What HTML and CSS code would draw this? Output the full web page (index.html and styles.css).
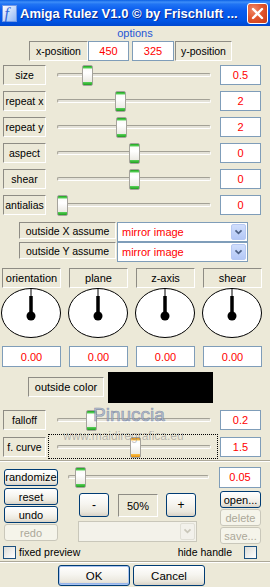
FILE: index.html
```html
<!DOCTYPE html>
<html>
<head>
<meta charset="utf-8">
<title>Amiga Rulez</title>
<link rel="stylesheet" href="styles.css">
</head>
<body>
<div class="titlebar">
  <svg class="app-icon" viewBox="0 0 16 17">
    <defs><linearGradient id="ig" x1="0" y1="0" x2="1" y2="1"><stop offset="0" stop-color="#ffffff"/><stop offset="1" stop-color="#8eb4f5"/></linearGradient></defs>
    <rect x="0.5" y="0.5" width="14" height="16" fill="url(#ig)" stroke="#6f97e6"/>
    <text x="2.5" y="14" font-family="Liberation Serif" font-style="italic" font-size="16" fill="#2f63d9">f</text>
  </svg>
  <div class="title">Amiga Rulez V1.0 © by Frischluft ...</div>
  <div class="close"><svg viewBox="0 0 19 19"><path d="M5 5 L14 14 M14 5 L5 14" stroke="#fff" stroke-width="2.4" stroke-linecap="round"/></svg></div>
</div>

<div class="opt-title">options</div>

<div class="pos-row">
  <div class="lbl w59">x-position</div>
  <div class="val w41">450</div>
  <div class="val w42 ml3">325</div>
  <div class="lbl w57 ml1">y-position</div>
</div>

<div class="sliders">
  <div class="srow"><div class="lbl">size</div><div class="slider"><div class="track"></div><div class="thumb" style="left:30px"></div></div><div class="val">0.5</div></div>
  <div class="srow"><div class="lbl">repeat x</div><div class="slider"><div class="track"></div><div class="thumb" style="left:63px"></div></div><div class="val">2</div></div>
  <div class="srow"><div class="lbl">repeat y</div><div class="slider"><div class="track"></div><div class="thumb" style="left:64px"></div></div><div class="val">2</div></div>
  <div class="srow"><div class="lbl">aspect</div><div class="slider"><div class="track"></div><div class="thumb" style="left:77px"></div></div><div class="val">0</div></div>
  <div class="srow"><div class="lbl">shear</div><div class="slider"><div class="track"></div><div class="thumb" style="left:77px"></div></div><div class="val">0</div></div>
  <div class="srow"><div class="lbl">antialias</div><div class="slider"><div class="track"></div><div class="thumb" style="left:5px"></div></div><div class="val">0</div></div>
</div>

<div class="assume">
  <div class="arow"><div class="lbl">outside X assume</div><div class="select"><span>mirror image</span><div class="ddbtn"><svg viewBox="0 0 15 16"><path d="M4 6 L7.5 9.5 L11 6" stroke="#4d6185" stroke-width="2" fill="none"/></svg></div></div></div>
  <div class="arow"><div class="lbl">outside Y assume</div><div class="select"><span>mirror image</span><div class="ddbtn"><svg viewBox="0 0 15 16"><path d="M4 6 L7.5 9.5 L11 6" stroke="#4d6185" stroke-width="2" fill="none"/></svg></div></div></div>
</div>

<div class="dials">
  <div class="dial-col"><div class="lbl">orientation</div>
    <svg class="dial" viewBox="0 0 60 50"><ellipse cx="30" cy="25" rx="29.5" ry="24.5" fill="#fff" stroke="#000"/><line x1="30" y1="0.5" x2="30" y2="9" stroke="#000" stroke-width="1"/><line x1="30" y1="8" x2="30" y2="28" stroke="#000" stroke-width="3.5"/><circle cx="30" cy="28" r="4.5"/></svg>
    <div class="val">0.00</div></div>
  <div class="dial-col"><div class="lbl">plane</div>
    <svg class="dial" viewBox="0 0 60 50"><ellipse cx="30" cy="25" rx="29.5" ry="24.5" fill="#fff" stroke="#000"/><line x1="30" y1="0.5" x2="30" y2="9" stroke="#000" stroke-width="1"/><line x1="30" y1="8" x2="30" y2="28" stroke="#000" stroke-width="3.5"/><circle cx="30" cy="28" r="4.5"/></svg>
    <div class="val">0.00</div></div>
  <div class="dial-col"><div class="lbl">z-axis</div>
    <svg class="dial" viewBox="0 0 60 50"><ellipse cx="30" cy="25" rx="29.5" ry="24.5" fill="#fff" stroke="#000"/><line x1="30" y1="0.5" x2="30" y2="9" stroke="#000" stroke-width="1"/><line x1="30" y1="8" x2="30" y2="28" stroke="#000" stroke-width="3.5"/><circle cx="30" cy="28" r="4.5"/></svg>
    <div class="val">0.00</div></div>
  <div class="dial-col"><div class="lbl">shear</div>
    <svg class="dial" viewBox="0 0 60 50"><ellipse cx="30" cy="25" rx="29.5" ry="24.5" fill="#fff" stroke="#000"/><line x1="30" y1="0.5" x2="30" y2="9" stroke="#000" stroke-width="1"/><line x1="30" y1="8" x2="30" y2="28" stroke="#000" stroke-width="3.5"/><circle cx="30" cy="28" r="4.5"/></svg>
    <div class="val">0.00</div></div>
</div>

<div class="color-row">
  <div class="lbl">outside color</div>
  <div class="swatch"></div>
</div>

<div class="sliders2">
  <div class="srow"><div class="lbl">falloff</div><div class="slider"><div class="track"></div><div class="thumb" style="left:34px"></div></div><div class="val">0.2</div></div>
  <div class="srow"><div class="lbl">f. curve</div><div class="slider focus"><div class="track"></div><div class="thumb hot" style="left:78px"></div></div><div class="val">1.5</div></div>
</div>

<div class="sep"></div>

<div class="rand-row">
  <div class="btn rnd">randomize</div>
  <div class="slider rnd"><div class="track"></div><div class="thumb" style="left:13px"></div></div>
  <div class="val">0.05</div>
</div>

<div class="mid">
  <div class="col-left">
    <div class="btn">reset</div>
    <div class="btn">undo</div>
    <div class="btn disabled">redo</div>
  </div>
  <div class="col-center">
    <div class="zoom-row">
      <div class="btn zb">-</div>
      <div class="lbl pct">50%</div>
      <div class="btn zb plus">+</div>
    </div>
    <div class="combo-dis"><div class="ddbtn-dis"><svg viewBox="0 0 15 16"><path d="M4 6 L7.5 9.5 L11 6" stroke="#c9c7ba" stroke-width="2" fill="none"/></svg></div></div>
  </div>
  <div class="col-right">
    <div class="btn">open...</div>
    <div class="btn disabled">delete</div>
    <div class="btn disabled">save...</div>
  </div>
</div>

<div class="check-row">
  <div class="cb"></div><span class="cb-text">fixed preview</span>
  <span class="cb-text right">hide handle</span><div class="cb cb-r"></div>
</div>

<div class="sep sep2"></div>

<div class="ok-row">
  <div class="btn big default">OK</div>
  <div class="btn big">Cancel</div>
</div>

<div class="wm1">Pinuccia</div>
<div class="wm2">www.maidiregrafica.eu</div>
</body>
</html>
```

FILE: styles.css
```css
* { box-sizing: border-box; }
html, body { margin: 0; padding: 0; }
body {
  width: 270px;
  height: 587px;
  overflow: hidden;
  position: relative;
  background: #ece9d8;
  font-family: "Liberation Sans", Arial, sans-serif;
  font-size: 10.5px;
  color: #000;
}

/* title bar */
.titlebar {
  height: 26px;
  display: flex;
  align-items: center;
  background: linear-gradient(to bottom, #0a5fe5 0%, #3d8ef8 8%, #2074f4 16%, #0a5cee 40%, #0055e5 80%, #0048cf 100%);
  color: #fff;
}
.app-icon { width: 16px; height: 17px; margin-left: 2px; flex: none; }
.title {
  flex: 1;
  margin-left: 2px;
  font-size: 13px;
  font-weight: bold;
  white-space: nowrap;
  overflow: hidden;
  text-shadow: 1px 1px 0 #0c2a8c;
}
.close {
  width: 21px;
  height: 21px;
  margin-right: 2px;
  flex: none;
  border: 1px solid #fff;
  border-radius: 3px;
  background: radial-gradient(circle at 30% 30%, #f08a6a 0%, #e2562e 45%, #c63a18 100%);
}
.close svg { width: 19px; height: 19px; display: block; }

.opt-title {
  height: 15px;
  line-height: 15px;
  text-align: center;
  color: #2557d6;
  font-size: 11px;
}

/* generic boxes */
.lbl {
  display: flex;
  align-items: center;
  justify-content: center;
  white-space: nowrap;
  border: 1px solid;
  border-color: #8e8c84 #ffffff #ffffff #8e8c84;
}
.val {
  display: flex;
  align-items: center;
  justify-content: center;
  border: 1px solid #7f9db9;
  background: #fff;
  color: #f00;
  font-size: 11px;
}

.pos-row { display: flex; height: 20px; margin-left: 29px; }
.w59 { width: 59px; }
.w57 { width: 57px; }
.w41 { width: 41px; }
.w42 { width: 42px; }
.ml3 { margin-left: 3px; }
.ml1 { margin-left: 1px; }

/* slider rows */
.sliders { margin-top: 4px; display: flex; flex-direction: column; gap: 6px; }
.sliders2 { margin-top: 7px; display: flex; flex-direction: column; gap: 7px; }
.srow { display: flex; height: 20px; margin-left: 3px; }
.srow .lbl { width: 43px; }
.srow .val { width: 41px; margin-left: 4px; }
.slider { position: relative; width: 164px; height: 20px; margin-left: 6px; }
.track {
  position: absolute;
  left: 5px;
  right: 5px;
  top: 8px;
  height: 4px;
  border: 1px solid;
  border-color: #a3a196 #ffffff #ffffff #a3a196;
  border-radius: 2px;
  background: #e4e2d8;
}
.thumb {
  position: absolute;
  top: 0;
  width: 11px;
  height: 21px;
  border: 1px solid #a5a39c;
  border-radius: 2px;
  background: linear-gradient(to bottom, #1f9f1f 0, #5ad35a 2px, #fbfbf9 3px, #ffffff 7px, #ebeae3 16px, #5ad35a 16px, #1f9f1f 19px);
}
.thumb.hot {
  background: linear-gradient(to bottom, #e6930e 0, #fbc04a 2px, #fbfbf9 3px, #ffffff 7px, #ebeae3 16px, #fbc04a 16px, #e6930e 19px);
}
.slider.focus::before {
  content: "";
  position: absolute;
  left: -4px;
  right: -2px;
  top: -3px;
  bottom: -2px;
  border: 1px dotted #000;
}

/* assume rows */
.assume { margin-top: 7px; margin-left: 19px; }
.arow { display: flex; height: 20px; }
.arow .lbl { width: 97px; height: 17px; }
.select {
  width: 131px;
  height: 20px;
  margin-left: 1px;
  display: flex;
  align-items: center;
  padding-left: 4px;
  border: 1px solid #7f9db9;
  background: #fff;
  color: #f00;
  font-size: 11px;
}
.ddbtn {
  margin-left: auto;
  margin-right: 1px;
  width: 15px;
  height: 16px;
  border: 1px solid #b7c9f3;
  border-radius: 2px;
  background: linear-gradient(to bottom, #d0defc, #b4c8f6);
}
.ddbtn svg, .ddbtn-dis svg { display: block; width: 13px; height: 14px; }

/* dials */
.dials {
  margin-top: 6px;
  margin-left: 2px;
  display: grid;
  grid-template-columns: repeat(4, 59px);
  column-gap: 8px;
}
.dial-col { display: flex; flex-direction: column; }
.dial-col .lbl { height: 20px; font-size: 11px; }
.dial { display: block; width: 60px; height: 50px; margin-left: -1px; }
.dial-col .val { margin-top: 8px; height: 21px; }

/* outside color */
.color-row { display: flex; margin-top: 5px; margin-left: 28px; height: 31px; }
.color-row .lbl { width: 76px; height: 20px; margin-top: 5px; font-size: 11px; }
.swatch { width: 105px; height: 31px; margin-left: 4px; background: #000; }

.sep {
  height: 2px;
  margin-top: 3px;
  border-top: 1px solid #aca899;
  border-bottom: 1px solid #fff;
}
.sep2 { margin-top: 2px; }

/* buttons */
.btn {
  display: flex;
  align-items: center;
  justify-content: center;
  height: 17px;
  border: 1px solid #003c74;
  border-radius: 3px;
  background: linear-gradient(to bottom, #ffffff 0%, #f6f5f0 45%, #ebe8de 80%, #d8d2c6 100%);
  font-size: 11px;
  color: #000;
}
.btn.disabled {
  border-color: #c9c7ba;
  background: #f5f4ea;
  color: #aca899;
}

.rand-row { display: flex; align-items: center; height: 22px; margin-top: 4px; }
.btn.rnd { width: 54px; margin-left: 4px; }
.slider.rnd { width: 157px; margin-left: 4px; }
.slider.rnd .track { left: 6px; right: 10px; }
.rand-row .val { width: 42px; height: 21px; }

.mid { display: flex; }
.col-left { width: 54px; margin-left: 4px; display: flex; flex-direction: column; gap: 1px; }
.col-center { width: 119px; margin-left: 20px; margin-top: 5px; }
.zoom-row { display: flex; height: 24px; }
.btn.zb { width: 30px; height: 24px; margin-left: 1px; font-size: 12px; }
.btn.zb.plus { margin-left: 8px; }
.lbl.pct { width: 40px; height: 23px; margin-top: 1px; margin-left: 9px; font-size: 11px; }
.combo-dis {
  margin-top: 4px;
  height: 21px;
  display: flex;
  align-items: center;
  border: 1px solid #c9c7ba;
  background: #f3f2ea;
}
.ddbtn-dis {
  margin-left: auto;
  margin-right: 1px;
  width: 15px;
  height: 17px;
  border: 1px solid #e0dfd6;
  border-radius: 2px;
  background: #f2f1eb;
}
.col-right { width: 41px; margin-left: 23px; margin-top: 3px; display: flex; flex-direction: column; gap: 1px; }

/* checkboxes */
.check-row { display: flex; align-items: center; height: 14px; margin-top: 1px; padding: 0 13px 0 3px; }
.cb {
  width: 13px;
  height: 13px;
  flex: none;
  border: 1px solid #1c5180;
  background: linear-gradient(135deg, #dcdcd7, #ffffff);
}
.cb-text { margin-left: 3px; font-size: 10.5px; }
.cb-text.right { margin-left: auto; }
.cb.cb-r { margin-left: 12px; }

.ok-row { display: flex; gap: 3px; margin-top: 2px; margin-left: 58px; }
.btn.big { width: 72px; height: 21px; font-size: 11.5px; }
.btn.default { box-shadow: inset 0 0 0 1px #a9c4f1, inset 0 -1px 0 1px #97b5ea; }

/* watermark overlay */
.wm1 {
  position: absolute;
  left: 93px;
  top: 404px;
  font-size: 19px;
  color: rgba(170, 182, 205, 0.75);
  -webkit-text-stroke: 0.6px rgba(100, 115, 150, 0.7);
}
.wm2 {
  position: absolute;
  left: 63px;
  top: 429px;
  font-size: 12px;
  color: rgba(120, 120, 125, 0.45);
}
```
